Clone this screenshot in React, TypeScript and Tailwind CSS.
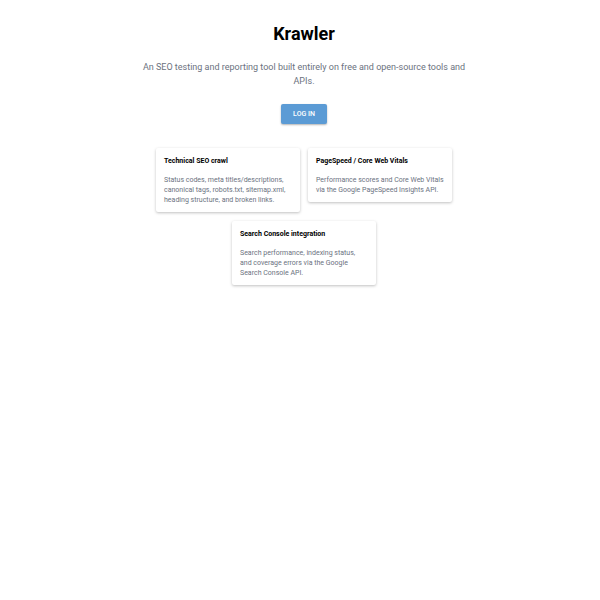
const features = [
  {
    title: 'Technical SEO crawl',
    body: 'Status codes, meta titles/descriptions, canonical tags, robots.txt, sitemap.xml, heading structure, and broken links.',
  },
  {
    title: 'PageSpeed / Core Web Vitals',
    body: 'Performance scores and Core Web Vitals via the Google PageSpeed Insights API.',
  },
  {
    title: 'Search Console integration',
    body: 'Search performance, indexing status, and coverage errors via the Google Search Console API.',
  },
];

export default function App() {
  return (
    <main className="min-h-[600px] bg-white font-['Roboto',sans-serif] pl-[8px] pt-[20px]">
      <div className="mx-auto flex w-[336px] flex-col items-center text-center">
        <h1 className="text-[18px] leading-[28px] font-bold text-black">Krawler</h1>
        <p className="mt-[12px] text-[9px] leading-[14px] text-[#6b7280]">
          An SEO testing and reporting tool built entirely on free and open-source tools and APIs.
        </p>
        <button className="mt-[16px] h-[20px] w-[46px] rounded-[2px] bg-[#5b9bd5] text-[7px] font-medium text-white shadow-[0_1px_2px_rgba(0,0,0,0.3)]">
          LOG IN
        </button>
      </div>
      <div className="mx-auto mt-[24px] flex w-[320px] flex-wrap items-start justify-center gap-x-[8px] gap-y-[9px]">
        {features.map((f) => (
          <div key={f.title} className="w-[144px] rounded-[2px] bg-white px-[8px] pt-[8px] pb-[7px] text-left shadow-[0_1px_3px_rgba(0,0,0,0.25)]">
            <h2 className="text-[7px] leading-[10px] font-bold text-black">{f.title}</h2>
            <p className="mt-[9px] text-[7px] leading-[10px] text-[#6b7280]">{f.body}</p>
          </div>
        ))}
      </div>
    </main>
  );
}
